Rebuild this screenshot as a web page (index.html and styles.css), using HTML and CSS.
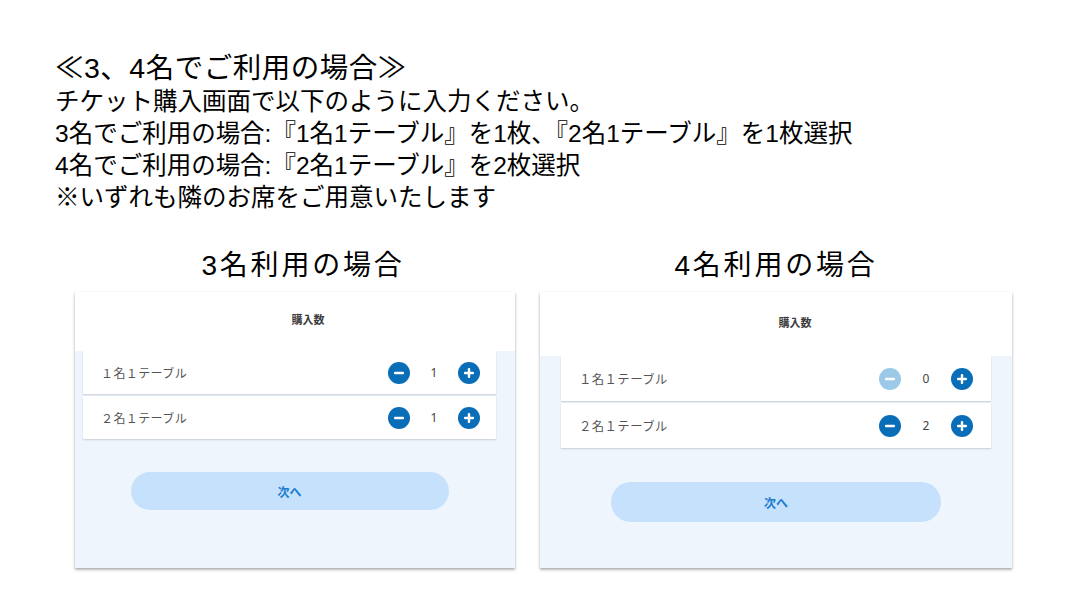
FILE: index.html
```html
<!DOCTYPE html>
<html lang="ja">
<head>
<meta charset="utf-8">
<title>3、4名でご利用の場合</title>
<link rel="stylesheet" href="styles.css">
</head>
<body>
<div class="page">
  <div class="intro">
    <div class="intro-title">≪3、4名でご利用の場合≫</div>
    <div class="intro-line">チケット購入画面で以下のように入力ください。</div>
    <div class="intro-line">3名でご利用の場合:『1名1テーブル』を1枚、『2名1テーブル』を1枚選択</div>
    <div class="intro-line">4名でご利用の場合:『2名1テーブル』を2枚選択</div>
    <div class="intro-line">※いずれも隣のお席をご用意いたします</div>
  </div>

  <div class="examples">
    <div class="example example-a">
      <div class="example-heading">3名利用の場合</div>
      <div class="card">
        <div class="card-head">購入数</div>
        <div class="card-body">
          <div class="row">
            <span class="row-label">１名１テーブル</span>
            <div class="stepper">
              <span class="step"><svg viewBox="0 0 22 22"><circle cx="11" cy="11" r="11"/><rect x="6" y="9.8" width="10" height="2.4" rx="1"/></svg></span>
              <span class="count">1</span>
              <span class="step"><svg viewBox="0 0 22 22"><circle cx="11" cy="11" r="11"/><rect x="6" y="9.8" width="10" height="2.4" rx="1"/><rect x="9.8" y="6" width="2.4" height="10" rx="1"/></svg></span>
            </div>
          </div>
          <div class="row">
            <span class="row-label">２名１テーブル</span>
            <div class="stepper">
              <span class="step"><svg viewBox="0 0 22 22"><circle cx="11" cy="11" r="11"/><rect x="6" y="9.8" width="10" height="2.4" rx="1"/></svg></span>
              <span class="count">1</span>
              <span class="step"><svg viewBox="0 0 22 22"><circle cx="11" cy="11" r="11"/><rect x="6" y="9.8" width="10" height="2.4" rx="1"/><rect x="9.8" y="6" width="2.4" height="10" rx="1"/></svg></span>
            </div>
          </div>
          <div class="next">次へ</div>
        </div>
      </div>
    </div>

    <div class="example example-b">
      <div class="example-heading">4名利用の場合</div>
      <div class="card">
        <div class="card-head">購入数</div>
        <div class="card-body">
          <div class="row">
            <span class="row-label">１名１テーブル</span>
            <div class="stepper">
              <span class="step step-off"><svg viewBox="0 0 22 22"><circle cx="11" cy="11" r="11"/><rect x="6" y="9.8" width="10" height="2.4" rx="1"/></svg></span>
              <span class="count">0</span>
              <span class="step"><svg viewBox="0 0 22 22"><circle cx="11" cy="11" r="11"/><rect x="6" y="9.8" width="10" height="2.4" rx="1"/><rect x="9.8" y="6" width="2.4" height="10" rx="1"/></svg></span>
            </div>
          </div>
          <div class="row">
            <span class="row-label">２名１テーブル</span>
            <div class="stepper">
              <span class="step"><svg viewBox="0 0 22 22"><circle cx="11" cy="11" r="11"/><rect x="6" y="9.8" width="10" height="2.4" rx="1"/></svg></span>
              <span class="count">2</span>
              <span class="step"><svg viewBox="0 0 22 22"><circle cx="11" cy="11" r="11"/><rect x="6" y="9.8" width="10" height="2.4" rx="1"/><rect x="9.8" y="6" width="2.4" height="10" rx="1"/></svg></span>
            </div>
          </div>
          <div class="next">次へ</div>
        </div>
      </div>
    </div>
  </div>
</div>
</body>
</html>
```

FILE: styles.css
```css
html, body {
  margin: 0;
  padding: 0;
  background: #ffffff;
}

.page {
  width: 1066px;
  height: 600px;
  overflow: hidden;
  font-family: "Liberation Sans", "Noto Sans CJK JP", sans-serif;
  color: #000;
}

.intro {
  padding: 50px 0 0 55px;
}

.intro-title {
  font-size: 28.5px;
  line-height: 36px;
  letter-spacing: 0.5px;
}

.intro-line {
  font-size: 24.5px;
  line-height: 32px;
}

.examples {
  display: flex;
  gap: 25px;
  padding-left: 75px;
  margin-top: 32px;
}

.example {
  display: flex;
  flex-direction: column;
}

.example-a { width: 440px; }
.example-b { width: 472px; }

.example-heading {
  font-size: 28px;
  line-height: 40px;
  letter-spacing: 2.8px;
  text-align: center;
  margin-bottom: 6px;
}

.example-a .example-heading { padding-left: 16px; }
.example-b .example-heading { padding-left: 0; }

.card {
  height: 276px;
  display: flex;
  flex-direction: column;
  background: #fff;
  box-shadow: 0 1px 2px rgba(0,0,0,0.18), 0 2px 3px rgba(0,0,0,0.22);
  font-family: "Noto Sans CJK JP", "Noto Sans", sans-serif;
}

.card-head {
  font-size: 11px;
  font-weight: 700;
  color: #3a3a3a;
  display: flex;
  align-items: center;
  justify-content: center;
  flex: none;
  box-sizing: border-box;
}

.example-a .card-head { height: 59px; padding: 0 0 6px 26px; }
.example-b .card-head { height: 64px; padding: 0 0 5px 38px; }

.card-body {
  flex: 1;
  background: #eef5fd;
  display: flex;
  flex-direction: column;
}

.example-a .card-body { padding: 0 19px 0 8px; }
.example-b .card-body { padding: 0 21px; }

.row {
  background: #fff;
  display: flex;
  align-items: center;
  justify-content: space-between;
  padding-left: 20px;
  box-shadow: 0 1px 1.5px rgba(0,0,0,0.16);
  margin-bottom: 2px;
}

.example-a .row { height: 43px; padding-right: 16px; }
.example-b .row { height: 45px; padding-right: 18px; }

.row-label {
  font-size: 12px;
  color: #555;
  letter-spacing: 0.4px;
}

.example-a .row-label { margin-left: -2px; }
.example-b .row-label { font-size: 12.4px; margin-left: -2px; }

.stepper {
  display: flex;
  align-items: center;
  gap: 12px;
}

.step {
  width: 22px;
  height: 22px;
  display: block;
}

.step svg {
  width: 22px;
  height: 22px;
  display: block;
}

.step svg circle { fill: #0a6db8; }
.step svg rect { fill: #ffffff; }
.step-off svg circle { fill: #9dc9e9; }

.count {
  width: 24px;
  text-align: center;
  font-size: 12px;
  color: #444;
  font-family: "Noto Sans", "Noto Sans CJK JP", sans-serif;
}

.example-b .count { width: 26px; }

.next {
  align-self: center;
  border-radius: 999px;
  background: #c6e1fb;
  color: #1c7dcd;
  font-size: 12px;
  font-weight: 700;
  display: flex;
  align-items: center;
  justify-content: center;
}

.example-a .next { width: 318px; height: 38px; margin-top: 31px; }
.example-b .next { width: 330px; height: 40px; margin-top: 32px; }
```
